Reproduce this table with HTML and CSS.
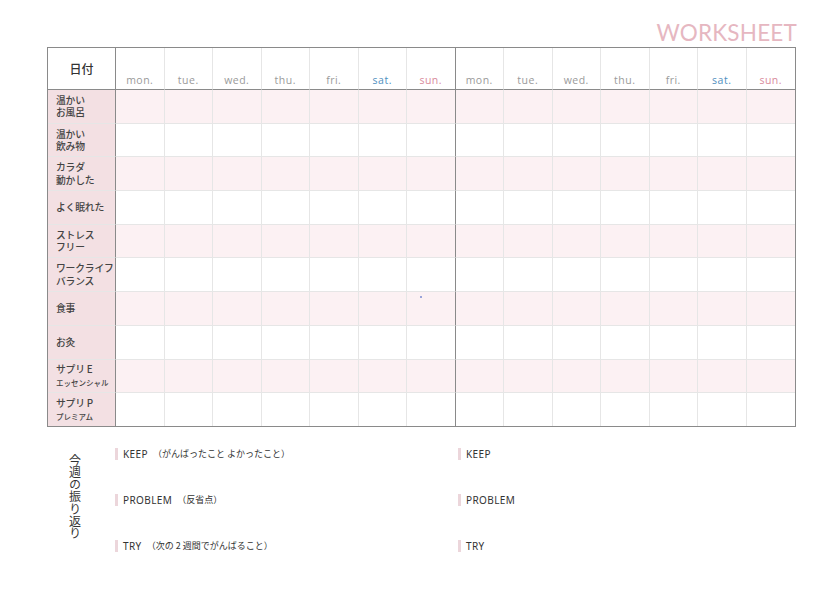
FILE: index.html
```html
<!DOCTYPE html>
<html lang="ja">
<head>
<meta charset="utf-8">
<link rel="stylesheet" href="styles.css">
</head>
<body>
<div class="page">
  <div class="title-row"><span class="title">WORKSHEET</span></div>
  <table class="sheet">
    <colgroup>
      <col class="c-label">
      <col span="14" class="c-day">
    </colgroup>
    <thead>
      <tr>
        <th class="lbl-head">日付</th>
        <th>mon.</th><th>tue.</th><th>wed.</th><th>thu.</th><th>fri.</th><th class="sat">sat.</th><th class="sun wk-end">sun.</th>
        <th>mon.</th><th>tue.</th><th>wed.</th><th>thu.</th><th>fri.</th><th class="sat">sat.</th><th class="sun last">sun.</th>
      </tr>
    </thead>
    <tbody>
      <tr class="odd"><td class="lbl">温かい<br>お風呂</td><td></td><td></td><td></td><td></td><td></td><td></td><td class="wk-end"></td><td></td><td></td><td></td><td></td><td></td><td></td><td class="last"></td></tr>
      <tr><td class="lbl">温かい<br>飲み物</td><td></td><td></td><td></td><td></td><td></td><td></td><td class="wk-end"></td><td></td><td></td><td></td><td></td><td></td><td></td><td class="last"></td></tr>
      <tr class="odd"><td class="lbl">カラダ<br>動かした</td><td></td><td></td><td></td><td></td><td></td><td></td><td class="wk-end"></td><td></td><td></td><td></td><td></td><td></td><td></td><td class="last"></td></tr>
      <tr><td class="lbl">よく眠れた</td><td></td><td></td><td></td><td></td><td></td><td></td><td class="wk-end"></td><td></td><td></td><td></td><td></td><td></td><td></td><td class="last"></td></tr>
      <tr class="odd"><td class="lbl">ストレス<br>フリー</td><td></td><td></td><td></td><td></td><td></td><td></td><td class="wk-end"></td><td></td><td></td><td></td><td></td><td></td><td></td><td class="last"></td></tr>
      <tr><td class="lbl">ワークライフ<br>バランス</td><td></td><td></td><td></td><td></td><td></td><td></td><td class="wk-end"></td><td></td><td></td><td></td><td></td><td></td><td></td><td class="last"></td></tr>
      <tr class="odd"><td class="lbl">食事</td><td></td><td></td><td></td><td></td><td></td><td></td><td class="wk-end dotcell"><span class="dot"></span></td><td></td><td></td><td></td><td></td><td></td><td></td><td class="last"></td></tr>
      <tr><td class="lbl">お灸</td><td></td><td></td><td></td><td></td><td></td><td></td><td class="wk-end"></td><td></td><td></td><td></td><td></td><td></td><td></td><td class="last"></td></tr>
      <tr class="odd"><td class="lbl">サプリ E<br><span class="sub">エッセンシャル</span></td><td></td><td></td><td></td><td></td><td></td><td></td><td class="wk-end"></td><td></td><td></td><td></td><td></td><td></td><td></td><td class="last"></td></tr>
      <tr class="lastrow"><td class="lbl">サプリ P<br><span class="sub">プレミアム</span></td><td></td><td></td><td></td><td></td><td></td><td></td><td class="wk-end"></td><td></td><td></td><td></td><td></td><td></td><td></td><td class="last"></td></tr>
    </tbody>
  </table>
  <div class="review">
    <div class="review-title">今週の振り返り</div>
    <div class="review-col">
      <div class="item"><span class="bar"></span>KEEP <span class="jp">（がんばったこと よかったこと）</span></div>
      <div class="item"><span class="bar"></span>PROBLEM <span class="jp">（反省点）</span></div>
      <div class="item"><span class="bar"></span>TRY <span class="jp">（次の 2 週間でがんばること）</span></div>
    </div>
    <div class="review-col">
      <div class="item"><span class="bar"></span>KEEP</div>
      <div class="item"><span class="bar"></span>PROBLEM</div>
      <div class="item"><span class="bar"></span>TRY</div>
    </div>
  </div>
</div>
</body>
</html>
```
FILE: styles.css
```css
html, body {
  margin: 0;
  padding: 0;
  background: #fff;
}
body {
  width: 840px;
  height: 594px;
  overflow: hidden;
  font-family: "Noto Sans", "Noto Sans CJK JP", sans-serif;
  color: #444;
}
.page {
  padding: 19px 0 0 47px;
  width: 748px;
}
.title-row {
  display: flex;
  justify-content: flex-end;
  height: 28px;
  margin-right: -2px;
}
.title {
  font-family: "Lato", "Noto Sans", sans-serif;
  font-size: 22.5px;
  line-height: 28px;
  letter-spacing: 0.2px;
  color: #e6b7c1;
}
.sheet {
  border-collapse: separate;
  border-spacing: 0;
  table-layout: fixed;
  width: 748px;
  border: 1px solid #8a8a8a;
}
.c-label { width: 68px; }
.c-day { width: 48.5px; }
.sheet th, .sheet td {
  box-sizing: border-box;
  padding: 0;
  border: 0;
  border-right: 1px solid #e6e6e6;
  border-bottom: 1px solid #e6e6e6;
}
.sheet .last { border-right: 0; }
.sheet tr.lastrow td { border-bottom: 0; height: 33px; }
.sheet thead th {
  height: 42px;
  border-bottom: 1px solid #8a8a8a;
  font-weight: normal;
  font-size: 10.5px;
  color: #9a9a9a;
  vertical-align: bottom;
  padding-bottom: 2px;
  letter-spacing: 0.5px;
  font-family: "Open Sans", "Noto Sans", sans-serif;
}
.sheet thead th.lbl-head {
  vertical-align: middle;
  padding-bottom: 1px;
  font-family: "Noto Sans CJK JP", sans-serif;
  font-size: 12px;
  font-weight: 500;
  color: #333;
  letter-spacing: 0;
}
.sheet th.sat { color: #4f8fc0; }
.sheet th.sun { color: #d98a9b; }
.sheet .lbl-head, .sheet .lbl {
  border-right: 1px solid #8a8a8a;
}
.sheet .wk-end {
  border-right: 1px solid #8a8a8a;
}
.sheet tbody td {
  height: 33.7px;
}
.sheet tbody tr.odd td { background: #fcf1f3; }
.sheet tbody td.lbl {
  background: #f3e0e3;
  font-family: "Noto Sans CJK JP", sans-serif;
  font-size: 9.8px;
  line-height: 12.5px;
  font-weight: 500;
  color: #444;
  padding-left: 8px;
  text-align: left;
  vertical-align: middle;
  white-space: nowrap;
  letter-spacing: -0.2px;
}
.sheet tbody tr.odd td.lbl { background: #f3e0e3; }
.sub {
  font-size: 7.5px;
  line-height: 10px;
  display: inline-block;
  letter-spacing: 0;
}
.dotcell { position: relative; }
.dot {
  position: absolute;
  left: 13px;
  top: 4px;
  width: 2px;
  height: 2px;
  border-radius: 50%;
  background: #7a8ad0;
}
.review {
  display: grid;
  grid-template-columns: 68px 343px 336px;
  margin-top: 19px;
}
.review-title {
  writing-mode: vertical-rl;
  font-family: "Noto Sans CJK JP", sans-serif;
  font-size: 12px;
  font-weight: 400;
  letter-spacing: 0.3px;
  color: #333;
  justify-self: center;
  padding-top: 8px;
  margin-right: 12px;
}
.review-col {
  display: flex;
  flex-direction: column;
  gap: 31px;
}
.item {
  display: flex;
  align-items: center;
  height: 15px;
  font-family: "Noto Sans", "Noto Sans CJK JP", sans-serif;
  font-size: 10px;
  color: #333;
  letter-spacing: 0.4px;
  white-space: pre;
}
.jp {
  font-family: "Noto Sans CJK JP", sans-serif;
  font-size: 9px;
  letter-spacing: 0;
  margin-left: 2px;
}
.bar {
  width: 3px;
  height: 12px;
  background: #ecd6db;
  margin-right: 5px;
}
```
